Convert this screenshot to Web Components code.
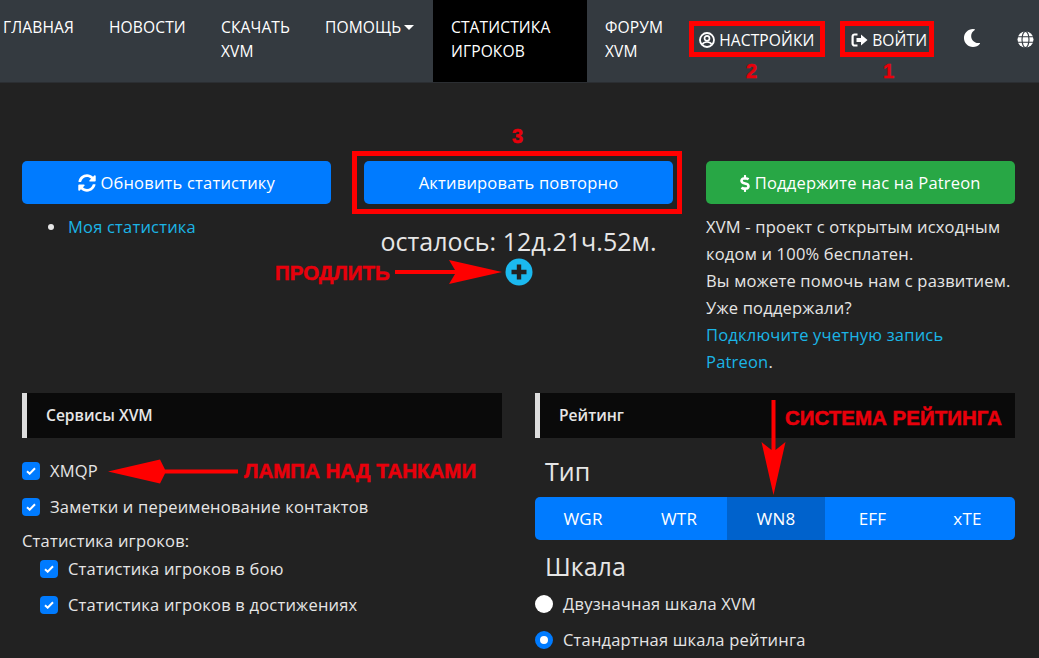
<!DOCTYPE html>
<html lang="ru">
<head>
<meta charset="utf-8">
<title>XVM</title>
<style>
html, body { margin: 0; height: 100%; overflow: hidden; background: #222; }
body { font: 16.5px/24px "Open Sans", "Liberation Sans", sans-serif; letter-spacing: .2px; color: #e6e6e6; }
svg.i { display: inline-block; fill: currentColor; vertical-align: -2px; }
</style>
</head>
<body>
<xvm-page>
  <xvm-nav>
    <nav-link w="106">ГЛАВНАЯ</nav-link>
    <nav-link w="112">НОВОСТИ</nav-link>
    <nav-link w="104">СКАЧАТЬ XVM</nav-link>
    <nav-link w="126" caret>ПОМОЩЬ</nav-link>
    <nav-link w="154" active>СТАТИСТИКА ИГРОКОВ</nav-link>
    <nav-link w="92">ФОРУМ XVM</nav-link>
    <nav-link w="152" mid>
      <svg class="i" width="16" height="16" viewBox="0 0 16 16"><circle cx="8" cy="8" r="7" fill="none" stroke="currentColor" stroke-width="1.8"/><circle cx="8" cy="6.3" r="2.5" fill="none" stroke="currentColor" stroke-width="1.7"/><path d="M3.4 12.4c.9-1.8 2.6-2.4 4.6-2.4s3.7.6 4.6 2.4" fill="none" stroke="currentColor" stroke-width="1.7"/></svg>
      НАСТРОЙКИ
    </nav-link>
    <nav-link w="112" mid>
      <svg class="i" width="17" height="16" viewBox="0 0 17 16"><path d="M6.5 2.5H3.6A2 2 0 0 0 1.6 4.500v7a2 2 0 0 0 2 2h2.900" fill="none" stroke="currentColor" stroke-width="2.200"/><path d="M5.500 6H10V2.600L16.500 8 10 13.400V10H5.500z"/></svg>
      ВОЙТИ
    </nav-link>
    <nav-link w="54" mid>
      <svg class="i" width="18" height="20" viewBox="0 0 512 512"><path d="M283.211 512c78.962 0 151.079-35.925 198.857-94.792 7.068-8.708-.639-21.43-11.562-19.35-124.203 23.654-238.262-71.576-238.262-196.954 0-72.222 38.662-138.635 101.498-174.394 9.686-5.512 7.25-20.197-3.756-22.23A258.156 258.156 0 0 0 283.211 0c-141.309 0-256 114.511-256 256 0 141.309 114.511 256 256 256z"/></svg>
    </nav-link>
    <nav-link w="50" mid>
      <svg class="i" width="17" height="17" viewBox="0 0 17 17"><circle cx="8.500" cy="8.500" r="8"/><g fill="none" stroke="#343a40" stroke-width="1.100"><ellipse cx="8.500" cy="8.500" rx="3.500" ry="8"/><path d="M.5 5.700h16M.5 11.300h16"/></g></svg>
    </nav-link>
  </xvm-nav>

  <top-row>
    <div>
      <xvm-button>
        <svg class="i" width="18" height="18" viewBox="0 0 512 512" style="vertical-align:-3px"><path d="M370.72 133.28C339.458 104.008 298.888 87.962 255.848 88c-77.458.068-144.328 53.178-162.791 126.85-1.344 5.363-6.122 9.15-11.651 9.15H24.103c-7.498 0-13.194-6.807-11.807-14.176C33.933 94.924 134.813 8 256 8c66.448 0 126.791 26.136 171.315 68.685L463.03 40.97C478.149 25.851 504 36.559 504 57.941V192c0 13.255-10.745 24-24 24H345.941c-21.382 0-32.09-25.851-16.971-40.971l41.75-41.749zM32 296h134.059c21.382 0 32.09 25.851 16.971 40.971l-41.75 41.75c31.262 29.273 71.835 45.319 114.876 45.28 77.418-.07 144.315-53.144 162.787-126.849 1.344-5.363 6.122-9.15 11.651-9.15h57.304c7.498 0 13.194 6.807 11.807 14.176C478.067 417.076 377.187 504 256 504c-66.448 0-126.791-26.136-171.315-68.685L48.97 471.03C33.851 486.149 8 475.441 8 454.059V320c0-13.255 10.745-24 24-24z"/></svg>
        Обновить статистику
      </xvm-button>
      <stat-links>Моя статистика</stat-links>
    </div>
    <div>
      <xvm-button>Активировать повторно</xvm-button>
      <time-left>осталось: 12д.21ч.52м.</time-left>
    </div>
    <div>
      <xvm-button color="green">
        <svg class="i" width="10" height="17" viewBox="0 0 288 512" style="vertical-align:-3px"><path d="M209.2 233.4l-108-31.6C88.7 198.2 80 186.5 80 173.5c0-16.3 13.2-29.5 29.5-29.5h66.3c12.2 0 24.2 3.7 34.2 10.5 6.1 4.1 14.3 3.1 19.5-2l34.8-34c7.1-6.9 6.1-18.4-1.8-24.5C238 74.8 207.4 64.1 176 64V16c0-8.8-7.2-16-16-16h-32c-8.8 0-16 7.2-16 16v48h-2.5C45.8 64-5.4 118.7.5 183.6c4.2 46.1 39.4 83.6 83.8 96.6l102.5 30c12.5 3.7 21.2 15.3 21.2 28.3 0 16.3-13.2 29.5-29.5 29.5h-66.3C100 368 88 364.3 78 357.5c-6.1-4.1-14.3-3.1-19.5 2l-34.8 34c-7.1 6.9-6.1 18.4 1.8 24.5 24.5 19.2 55.1 29.9 86.5 30v48c0 8.8 7.2 16 16 16h32c8.8 0 16-7.2 16-16v-48.2c46.6-.9 90.3-28.6 105.7-72.7 21.5-61.6-14.6-124.8-72.5-141.7z"/></svg>
        Поддержите нас на Patreon
      </xvm-button>
      <patreon-info></patreon-info>
    </div>
  </top-row>

  <bottom-row>
    <div>
      <section-head>Сервисы XVM</section-head>
      <check-row>XMQP</check-row>
      <check-row>Заметки и переименование контактов</check-row>
      <sub-label>Статистика игроков:</sub-label>
      <check-row nested>Статистика игроков в бою</check-row>
      <check-row nested>Статистика игроков в достижениях</check-row>
    </div>
    <div>
      <section-head>Рейтинг</section-head>
      <sub-title>Тип</sub-title>
      <rating-group active="WN8"></rating-group>
      <sub-title>Шкала</sub-title>
      <radio-row>Двузначная шкала XVM</radio-row>
      <radio-row checked>Стандартная шкала рейтинга</radio-row>
    </div>
  </bottom-row>

  <red-notes></red-notes>
</xvm-page>

<script>
function shadow(el, html) {
  el.attachShadow({ mode: 'open' }).innerHTML = html
}

class XvmPage extends HTMLElement {
  constructor() {
    super()
    shadow(this, `<style>:host{display:block;position:relative;width:1039px;height:658px;overflow:hidden}</style><slot></slot>`)
  }
}

class XvmNav extends HTMLElement {
  constructor() {
    super()
    shadow(this, `<style>
      :host{display:flex;height:82px;margin-left:-15px;background:#343a40;border-bottom:1px solid #2b2e32;width:1060px;font-size:15.600px;letter-spacing:.1px}
    </style><slot></slot>`)
  }
}

class NavLink extends HTMLElement {
  connectedCallback() {
    if (this.shadowRoot) return
    const w = this.getAttribute('w')
    const active = this.hasAttribute('active')
    const mid = this.hasAttribute('mid')
    shadow(this, `<style>
      :host{display:block;box-sizing:border-box;width:${w}px;flex:none;padding:${mid ? '28px 0 0 20px' : '15px 18px 0'};
        line-height:24px;color:#fff;white-space:${mid ? 'nowrap' : 'normal'};background:${active ? '#000' : 'transparent'}}
      .caret{display:inline-block;margin-left:3px;vertical-align:3px;border:5px solid transparent;border-top-color:#fff;border-bottom:0}
    </style><slot></slot>${this.hasAttribute('caret') ? '<span class="caret"></span>' : ''}`)
  }
}

class TopRow extends HTMLElement {
  constructor() {
    super()
    shadow(this, `<style>
      :host{display:grid;grid-template-columns:309px 309px 309px;column-gap:33px;padding:78px 24px 0 22px;height:232px}
    </style><slot></slot>`)
  }
}

class XvmButton extends HTMLElement {
  connectedCallback() {
    if (this.shadowRoot) return
    const bg = this.getAttribute('color') === 'green' ? '#28a745' : '#007bff'
    shadow(this, `<style>
      :host{display:block;height:43px;line-height:43px;text-align:center;color:#fff;background:${bg};border-radius:5px}
    </style><slot></slot>`)
  }
}

class StatLinks extends HTMLElement {
  constructor() {
    super()
    shadow(this, `<style>
      :host{display:block;margin-top:11px;padding-left:46px;position:relative;color:#1bb5e6}
      i{position:absolute;left:26px;top:9px;width:6px;height:6px;border-radius:50%;background:#e6e6e6}
    </style><i></i><slot></slot>`)
  }
}

class TimeLeft extends HTMLElement {
  constructor() {
    super()
    shadow(this, `<style>
      :host{display:block;text-align:center;margin-top:19px;font-size:25px;letter-spacing:.05px;line-height:36px;color:#e6e6e6;white-space:nowrap}
      svg{display:block;margin:-1px auto 0}
    </style><slot></slot>
    <svg width="28" height="28" viewBox="0 0 28 28"><circle cx="14" cy="14" r="13.500" fill="#1bb9ef"/><path d="M11.800 6.500h4.400v5.300h5.300v4.400h-5.300v5.300h-4.400v-5.300H6.500v-4.400h5.300z" fill="#222"/></svg>`)
  }
}

class PatreonInfo extends HTMLElement {
  constructor() {
    super()
    shadow(this, `<style>
      :host{display:block;margin-top:9px;line-height:27px;white-space:nowrap}
      a{color:#1bb5e6;text-decoration:none}
    </style>XVM - проект с открытым исходным<br>кодом и 100% бесплатен.<br>Вы можете помочь нам с развитием.<br>Уже поддержали?<br><a>Подключите учетную запись</a><br><a>Patreon</a>.`)
  }
}

class BottomRow extends HTMLElement {
  constructor() {
    super()
    shadow(this, `<style>
      :host{display:grid;grid-template-columns:480px 480px;column-gap:33px;padding:0 24px 0 22px}
    </style><slot></slot>`)
  }
}

class SectionHead extends HTMLElement {
  constructor() {
    super()
    shadow(this, `<style>
      :host{display:block;box-sizing:border-box;height:45px;margin-bottom:15px;line-height:45px;padding-left:19px;
        border-left:5px solid #ddd;background:#0a0a0a;font-size:15.600px;letter-spacing:0;font-weight:600;color:#e6e6e6}
    </style><slot></slot>`)
  }
}

class CheckRow extends HTMLElement {
  connectedCallback() {
    if (this.shadowRoot) return
    shadow(this, `<style>
      :host{display:flex;align-items:center;height:36px;gap:10px;padding-left:${this.hasAttribute('nested') ? 18 : 0}px}
      b{flex:none;width:18px;height:18px;border-radius:4px;background:#007bff;display:flex;align-items:center;justify-content:center}
    </style><b><svg width="10" height="8" viewBox="0 0 10 8"><path d="M1 4.200l2.700 2.500L9 1.200" fill="none" stroke="#fff" stroke-width="2"/></svg></b><span><slot></slot></span>`)
  }
}

class SubLabel extends HTMLElement {
  constructor() {
    super()
    shadow(this, `<style>:host{display:block;padding-top:6px;height:20px;line-height:20px}</style><slot></slot>`)
  }
}

class SubTitle extends HTMLElement {
  constructor() {
    super()
    shadow(this, `<style>
      :host{display:block;height:36px;line-height:36px;padding-left:10px;font-size:25px;letter-spacing:0;margin-top:2px;margin-bottom:2px}
    </style><slot></slot>`)
  }
}

class RatingGroup extends HTMLElement {
  constructor() {
    super()
    const items = ['WGR', 'WTR', 'WN8', 'EFF', 'xTE']
    const on = this.getAttribute('active')
    shadow(this, `<style>
      :host{display:grid;grid-template-columns:96px 96px 98px 95px 95px;height:43px;margin:8px 0 8px;border-radius:5px;overflow:hidden;background:#007bff;color:#fff;font-size:17px}
      span{line-height:43px;text-align:center}
      .on{background:#0062cc}
    </style>` + items.map(t => `<span class="${t === on ? 'on' : ''}">${t}</span>`).join(''))
  }
}

class RadioRow extends HTMLElement {
  connectedCallback() {
    if (this.shadowRoot) return
    const checked = this.hasAttribute('checked')
    shadow(this, `<style>
      :host{display:flex;align-items:center;height:36px;gap:10px}
      b{flex:none;box-sizing:border-box;width:18px;height:18px;border-radius:50%;background:#fff;
        border:${checked ? '5.500px solid #007bff' : '0'}}
    </style><b></b><span><slot></slot></span>`)
  }
}

// red marks drawn over the page
class RedNotes extends HTMLElement {
  constructor() {
    super()
    const box = (x, y, w, h) => `<div class="box" style="left:${x}px;top:${y}px;width:${w}px;height:${h}px"></div>`
    const note = (x, y, size, text) => `<div class="note" style="left:${x}px;top:${y}px;font-size:${size}px">${text}</div>`
    shadow(this, `<style>
      :host{position:absolute;inset:0;display:block;pointer-events:none}
      .box{position:absolute;box-sizing:border-box;border:5px solid #f00}
      .note{position:absolute;font-family:"Liberation Sans",Arial,sans-serif;font-weight:700;letter-spacing:0;line-height:24px;color:#e8000b;white-space:nowrap;-webkit-text-stroke:.5px #e8000b}
      svg{position:absolute;left:0;top:0}
    </style>
    ${box(689, 21, 136, 36)}${box(840, 21, 94, 36)}${box(352, 151, 330, 63)}
    ${note(746, 59, 20, '2')}${note(883, 59, 20, '1')}${note(512, 124, 20, '3')}
    ${note(275, 261, 20.500, 'ПРОДЛИТЬ')}
    ${note(244, 459, 20.500, 'ЛАМПА НАД ТАНКАМИ')}
    ${note(785, 406, 20.500, 'СИСТЕМА РЕЙТИНГА')}
    <svg width="1039" height="658" viewBox="0 0 1039 658" fill="#f00">
      <path d="M395 270h60l-6-10 53 12-53 12 6-10h-60z"/>
      <path d="M238 473.500h-73l-5 10-52-12 52-12 5 10h73z"/>
      <path d="M775.500 400v50l10-8-12 53-12-53 10 8v-50z"/>
    </svg>`)
  }
}

customElements.define('xvm-page', XvmPage)
customElements.define('xvm-nav', XvmNav)
customElements.define('nav-link', NavLink)
customElements.define('top-row', TopRow)
customElements.define('xvm-button', XvmButton)
customElements.define('stat-links', StatLinks)
customElements.define('time-left', TimeLeft)
customElements.define('patreon-info', PatreonInfo)
customElements.define('bottom-row', BottomRow)
customElements.define('section-head', SectionHead)
customElements.define('check-row', CheckRow)
customElements.define('sub-label', SubLabel)
customElements.define('sub-title', SubTitle)
customElements.define('rating-group', RatingGroup)
customElements.define('radio-row', RadioRow)
customElements.define('red-notes', RedNotes)
</script>
</body>
</html>
